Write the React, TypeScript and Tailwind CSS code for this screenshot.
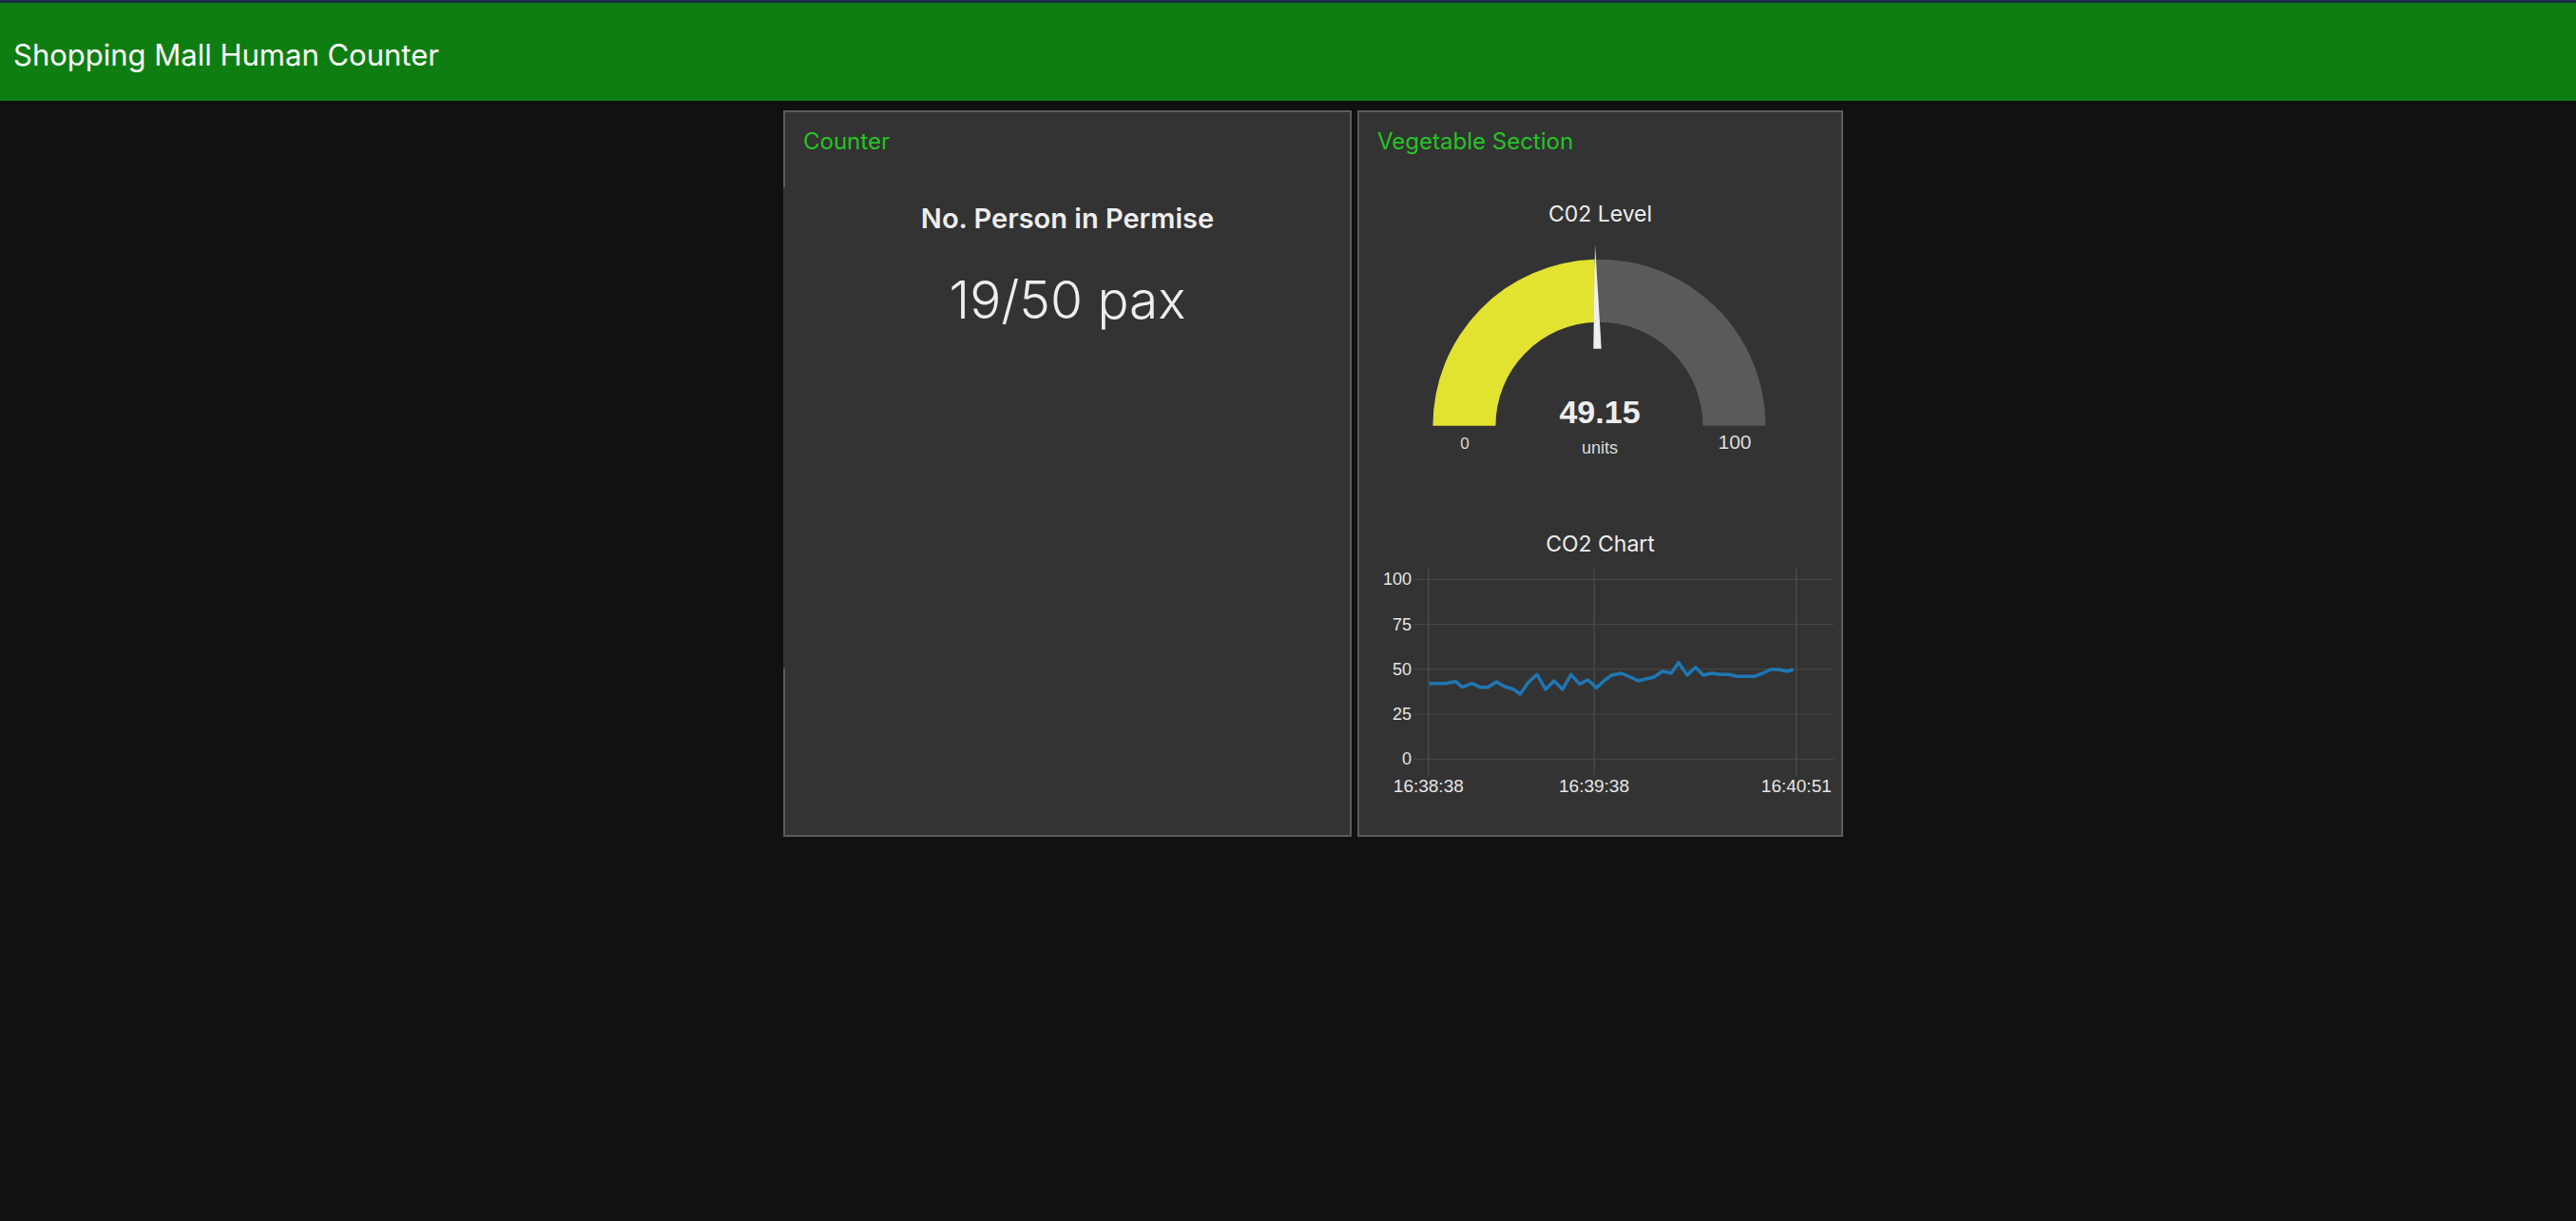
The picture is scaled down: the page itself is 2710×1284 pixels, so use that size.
const sans = "font-['Inter','Noto_Sans',sans-serif]"

const co2Points = [
    [73.5, 128.7], [90.7, 128.7], [101.4, 126.7], [108.5, 132.7], [118.5, 128.7],
    [127.1, 132.7], [135.3, 132.7], [144.2, 127], [153.1, 132], [162.1, 134.7],
    [169.2, 140], [178.1, 127.3], [187.1, 119.3], [196, 135], [204.9, 126],
    [213.8, 135], [222.8, 119.3], [231.7, 129.3], [240.6, 125], [249.5, 133.3],
    [258.5, 125], [265.6, 120], [275.6, 118], [285.2, 122], [293.4, 126],
    [301.3, 124], [310.2, 122], [319.2, 115.7], [328.1, 118], [335.9, 106.7],
    [344.9, 120], [353.8, 111.7], [362, 120], [370.9, 118], [379.8, 119.3],
    [388.8, 119.3], [397.7, 121.3], [406.6, 121.3], [415.5, 121.3], [424.5, 118],
    [432.7, 114], [441.2, 114], [450.2, 116], [456.6, 114],
]

const yTicks = [
    { label: "100", y: 19.3 },
    { label: "75", y: 66.6 },
    { label: "50", y: 113.8 },
    { label: "25", y: 161.1 },
    { label: "0", y: 208.3 },
]

const xTicks = [
    { label: "16:38:38", x: 72.8 },
    { label: "16:39:38", x: 247 },
    { label: "16:40:51", x: 459.8 },
]

function Gauge() {
    return (
        <svg width="507" height="240" className="block" style={{ fontFamily: "'Liberation Sans', Arial, sans-serif" }}>
            <path d="M 77.4 197.7 A 175 175 0 0 1 247.7 22.8 L 249.5 88.7 A 109 109 0 0 0 143.4 197.7 Z" fill="#e2e331" />
            <path d="M 247.7 22.8 A 175 175 0 0 1 427.4 197.7 L 361.4 197.7 A 109 109 0 0 0 249.5 88.7 Z" fill="#5a5a5a" />
            <polygon points="248,6.7 246.3,116.7 254.7,116.7" fill="#efefef" />
            <text x="253" y="195" textAnchor="middle" fontSize="34" fontWeight="700" fill="#eeeeee">49.15</text>
            <text x="253" y="226.7" textAnchor="middle" fontSize="18" fill="#dddddd">units</text>
            <text x="111" y="221.7" textAnchor="middle" fontSize="17" fill="#dddddd">0</text>
            <text x="395" y="222.3" textAnchor="middle" fontSize="21" fill="#dddddd">100</text>
        </svg>
    )
}

function Co2Chart() {
    return (
        <svg width="507" height="250" className="block" style={{ fontFamily: "'Liberation Sans', Arial, sans-serif" }}>
            {yTicks.map(t => (
                <g key={t.label}>
                    <line x1="57" x2="499" y1={t.y} y2={t.y} stroke="#4a4a4a" strokeWidth="1" />
                    <text x="55" y={t.y} textAnchor="end" dominantBaseline="central" fontSize="18" fill="#e6e6e6">{t.label}</text>
                </g>
            ))}
            {xTicks.map(t => (
                <g key={t.label}>
                    <line x1={t.x} x2={t.x} y1="8.3" y2="225" stroke="#555555" strokeWidth="1" />
                    <text x={t.x} y="243.3" textAnchor="middle" fontSize="19" fill="#e6e6e6">{t.label}</text>
                </g>
            ))}
            <polyline
                points={co2Points.map(p => p.join(",")).join(" ")}
                fill="none"
                stroke="#1f77b4"
                strokeWidth="3.5"
                strokeLinejoin="round" />
        </svg>
    )
}

export default function App() {
    return (
        <div className={`min-h-screen bg-[#111111] text-[#eeeeee] ${sans}`}>
            <header className="h-[106px] border-t-[3px] border-[#1c2f4d] bg-[#0f7e12] pl-[14px] pt-[39px]">
                <h1 className="text-[31px] leading-none text-white">Shopping Mall Human Counter</h1>
            </header>

            <main className="flex justify-center gap-[6px] pl-[53px] pt-[10px]">
                <section className="relative h-[764px] w-[598px] border-2 border-[#5c5c5c] bg-[#333333] px-[19px] pt-[19px]">
                    <h2 className="text-[24px] leading-none text-[#25c425]">Counter</h2>
                    <p className="mt-[54px] text-center text-[29px] font-semibold leading-none">No. Person in Permise</p>
                    <p className="mt-[44px] text-center text-[55px] font-light leading-none">19/50 pax</p>
                    <div className="absolute -left-[2px] top-[79px] h-[506px] w-[2px] bg-[#333333]" />
                </section>

                <section className="h-[764px] w-[511px] border-2 border-[#5c5c5c] bg-[#333333] pt-[19px]">
                    <h2 className="px-[19px] text-[24px] leading-none text-[#25c425]">Vegetable Section</h2>
                    <p className="mt-[53px] text-center text-[23px] leading-none">C02 Level</p>
                    <div className="mt-[13px]">
                        <Gauge />
                    </div>
                    <p className="mt-[71px] text-center text-[23px] leading-none">CO2 Chart</p>
                    <div className="mt-[6px]">
                        <Co2Chart />
                    </div>
                </section>
            </main>
        </div>
    )
}
